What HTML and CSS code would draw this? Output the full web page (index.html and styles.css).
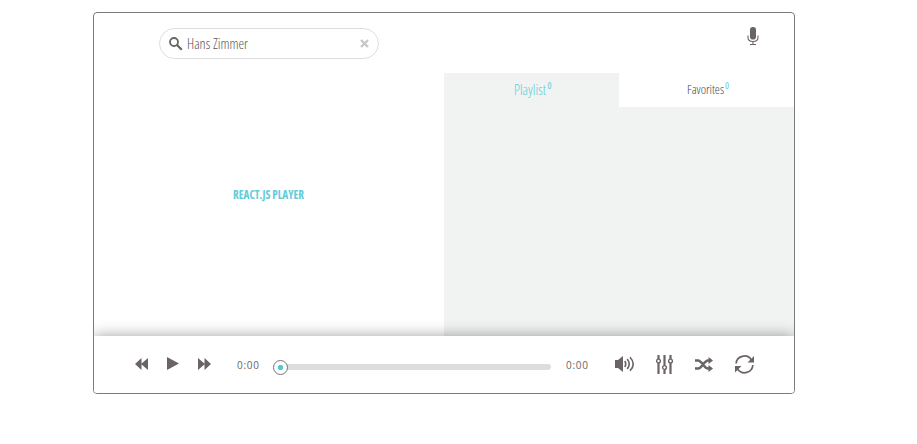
FILE: index.html
```html
<!DOCTYPE html>
<html lang="en">
<head>
<meta charset="utf-8">
<title>React.js Player</title>
<link rel="stylesheet" href="styles.css">
</head>
<body>
<main class="player">
  <header class="header">
    <div class="search">
      <svg class="search-icon" width="14" height="14" viewBox="0 0 14 14"><circle cx="5" cy="5" r="4" fill="none" stroke="currentColor" stroke-width="1.8"/><path d="M8 8l4.800 4.800" stroke="currentColor" stroke-width="2.200"/></svg>
      <svg class="query" width="64" height="20"><text x="0" y="15" textLength="61" lengthAdjust="spacingAndGlyphs">Hans Zimmer</text></svg>
      <svg class="clear" width="9" height="9" viewBox="0 0 9 9"><path d="M1 1l7 7M8 1L1 8" stroke="currentColor" stroke-width="2.400"/></svg>
    </div>
    <svg class="mic" width="12" height="19" viewBox="0 0 12 19"><rect x="3" y="0" width="6" height="12.5" rx="2.8" fill="currentColor"/><path d="M1 8.5v2q0 4 5 4t5-4v-2M6 14.5v3M3 17.5h6" fill="none" stroke="currentColor" stroke-width="1.1"/></svg>
  </header>
  <div class="content">
    <section class="stage">
      <svg class="brand" width="71" height="20"><text x="0" y="14" textLength="71" lengthAdjust="spacingAndGlyphs">REACT.JS PLAYER</text></svg>
    </section>
    <section class="lists">
      <nav class="tabs">
        <div class="tab tab-active"><svg width="36" height="22"><text x="0" y="16" textLength="32" lengthAdjust="spacingAndGlyphs">Playlist</text><text class="count" x="33.500" y="10" textLength="4" lengthAdjust="spacingAndGlyphs">0</text></svg></div>
        <div class="tab"><svg width="40" height="22"><text x="0" y="15" textLength="37" lengthAdjust="spacingAndGlyphs">Favorites</text><text class="count" x="38" y="10" textLength="4" lengthAdjust="spacingAndGlyphs">0</text></svg></div>
      </nav>
    </section>
  </div>
  <footer class="controls">
    <div class="transport">
      <svg width="13" height="12" viewBox="0 0 13 12"><path d="M6.5 0v12L0 6zM13 0v12L6 6z" fill="currentColor"/></svg>
      <svg width="12" height="13" viewBox="0 0 12 13"><path d="M0 0l12 6.5L0 13z" fill="currentColor"/></svg>
      <svg width="13" height="12" viewBox="0 0 13 12"><path d="M0 0v12l7-6zM6.5 0v12L13 6z" fill="currentColor"/></svg>
    </div>
    <span class="time">0:00</span>
    <div class="seek"><div class="thumb"></div></div>
    <span class="time">0:00</span>
    <div class="actions">
      <svg class="volume" width="20" height="16" viewBox="0 0 20 16"><path d="M0 4h3l5-4v16l-5-4H0z" fill="currentColor"/><path d="M9.8 5q2 3 0 6M12.2 3q4 5 0 10M15 1.2q6.500 6.800 0 13.600" fill="none" stroke="currentColor" stroke-width="1.6"/></svg>
      <svg width="17" height="19" viewBox="0 0 17 19"><g fill="none" stroke="currentColor"><path d="M2.500 0v4M2.500 8v11M8.500 0v10.500M8.500 14.500v4.500M14.500 0v4M14.500 8v11" stroke-width="2.200"/><circle cx="2.500" cy="6" r="1.900" stroke-width="1.400"/><circle cx="8.500" cy="12.500" r="1.900" stroke-width="1.400"/><circle cx="14.500" cy="6" r="1.900" stroke-width="1.400"/></g></svg>
      <svg width="18" height="15" viewBox="0 0 18 15"><g fill="none" stroke="currentColor" stroke-width="2.500"><path d="M0 3.500h3C7 3.500 9 11.500 13 11.500h2M0 11.500h3C7 11.500 9 3.500 13 3.500h2"/></g><path d="M13.500 0L18 3.500l-4.500 3.500zM13.500 8L18 11.500l-4.500 3.500z" fill="currentColor"/></svg>
      <svg width="19" height="19" viewBox="0 0 19 19"><path d="M1.200 8.500C1.500 1 12 -2 16.500 5M17.800 10C17.500 18 7 20.500 2.500 14" fill="none" stroke="currentColor" stroke-width="1.700"/><path d="M19 1v6.500h-6.500zM0 11h6.500L0 17.500z" fill="currentColor"/></svg>
    </div>
  </footer>
</main>
</body>
</html>
```
FILE: styles.css
```css
* { box-sizing: border-box; }
body {
  margin: 0;
  background: #fff;
  color: #6b6464;
  font-family: "Open Sans", sans-serif;
}
svg { display: block; flex: none; overflow: visible; }
text { fill: currentColor; font-stretch: condensed; }
.player {
  width: 702px;
  height: 382px;
  margin: 12px 0 0 93px;
  border: 1px solid #7b7b7b;
  border-radius: 4px;
  overflow: hidden;
  display: flex;
  flex-direction: column;
}
.header {
  height: 60px;
  flex: none;
  display: flex;
  justify-content: space-between;
  align-items: flex-start;
  padding: 14px 35px 0 65px;
}
.search {
  width: 220px;
  height: 31px;
  margin-top: 1px;
  padding: 0 9px;
  border: 1px solid #ddd;
  border-radius: 16px;
  display: flex;
  align-items: center;
}
.query { margin-left: 4px; font-size: 14px; font-weight: 350; color: #555; }
.clear { margin-left: auto; color: #c8c8c8; }
.content { flex: 1; display: flex; }
.stage {
  width: 350px;
  display: flex;
  align-items: flex-start;
  padding: 112px 0 0 139px;
}
.brand { color: #62cbd7; font-size: 12px; font-weight: 700; }
.lists { flex: 1; background: #f1f3f2; }
.tabs { display: flex; height: 34px; }
.tab {
  flex: 1;
  display: flex;
  justify-content: center;
  padding-top: 6px;
  background: #fff;
  font-size: 12.5px;
  font-weight: 350;
  color: #444;
}
.tab-active {
  background: #f1f3f2;
  color: #62cbd7;
  font-size: 14px;
}
.count { fill: #62cbd7; font-size: 8px; font-weight: 400; }
.controls {
  height: 57px;
  flex: none;
  display: flex;
  align-items: center;
  padding: 0 40px 0 41px;
  background: #fff;
  box-shadow: 0 0 14px rgba(0, 0, 0, .38);
}
.transport { display: flex; align-items: center; gap: 19px; margin: 0 26px 2px 0; }
.time {
  width: 23px;
  margin-top: 1px;
  font: 10px/14px "Open Sans", sans-serif;
  letter-spacing: .7px;
  white-space: nowrap;
}
.seek {
  width: 278px;
  height: 6px;
  margin: 5px 15px 0 13px;
  border-radius: 3px;
  background: #ddd;
  display: flex;
  align-items: center;
}
.thumb {
  width: 15px;
  height: 15px;
  border: 1px solid #777;
  border-radius: 50%;
  background: radial-gradient(circle, #57c7d2 0 2.5px, #fff 3px);
}
.actions { display: flex; align-items: center; gap: 22px; margin-left: auto; }
.volume { margin: 0 -1px 2px 1px; }
```
